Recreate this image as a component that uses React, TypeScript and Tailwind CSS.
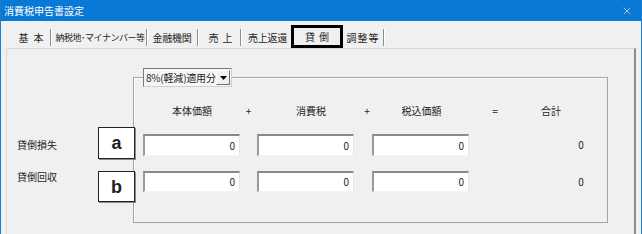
import { X } from 'lucide-react';

const tabs = [
  { label: '基本', cls: 'w-[39px] pl-[5px] tracking-[5px] border-r' },
  { label: '納税地･マイナンバー等', cls: 'w-[96px] pl-[3px] text-[9px] tracking-[-0.5px] border-r' },
  { label: '金融機関', cls: 'w-[51px] tracking-[-0.3px] border-r' },
  { label: '売上', cls: 'w-[43px] pl-[7px] tracking-[4px] border-r' },
  { label: '売上返還', cls: 'w-[50px] pl-[3px] tracking-[-0.3px]' },
];

const Field = ({ top, h }: { top: string; h: string }) => (
  <div
    className={`${top} ${h} w-[97px] bg-white border-t-2 border-l-2 border-t-[#8a8a8a] border-l-[#9a9a9a] border-r border-b border-r-[#e6e6e6] border-b-[#f4f4f4] flex items-center justify-end pr-[4px] text-[10px] leading-none`}
  >
    0
  </div>
);

const Mark = ({ letter }: { letter: string }) => (
  <div className="w-[37px] h-full bg-white border border-[#222] shadow-[1px_1px_0_#8a8a8a] flex items-center justify-center font-['Liberation_Sans',sans-serif] font-bold text-[18px] leading-none">
    {letter}
  </div>
);

export default function App() {
  return (
    <div className="w-[642px] h-[234px] overflow-hidden bg-[#f0f0f0] border-x border-[#1a7fd4] flex flex-col text-[#1e1e1e] font-['Noto_Sans_CJK_JP',sans-serif] text-[10px]">
      {/* title bar */}
      <div className="h-[21px] shrink-0 bg-[#0a78d5] flex items-center justify-between pl-[3px] pr-[8px] text-white text-[10px]">
        <span>消費税申告書設定</span>
        <X size={12} strokeWidth={1.2} />
      </div>

      {/* tabs */}
      <div className="h-[23px] mt-[4px] shrink-0 flex items-start pl-[11px]">
        {tabs.map((t) => (
          <div
            key={t.label}
            className={`${t.cls} mt-[4px] h-[17px] flex items-center justify-center border-[#8e8e8e] shadow-[1px_0_0_#ffffff] whitespace-nowrap`}
          >
            {t.label}
          </div>
        ))}
        <div className="w-[52px] h-[23px] border-[3px] border-black flex items-center justify-center tracking-[4px] pl-[4px]">
          貸倒
        </div>
        <div className="w-[41px] mt-[4px] h-[17px] flex items-center justify-center border-r border-[#8e8e8e] shadow-[1px_0_0_#ffffff] tracking-[1px]">
          調整等
        </div>
      </div>

      {/* panel */}
      <div className="flex-1 mx-[5px] border-l border-t border-[#dadada] border-r-2 border-r-[#8c8c8c]">
        <div className="mt-[28px] ml-[126px] w-[475px] h-[146px] border border-[#a3a3a3] shadow-[inset_1px_1px_0_#ffffff]">
          {/* dropdown */}
          <div className="-mt-[10px] ml-[9px] w-[89px] h-[19px] bg-[#f6f6f6] border border-t-[#7a7a7a] border-l-[#7a7a7a] border-r-[#d0d0d0] border-b-[#d0d0d0] flex items-center pl-[2px] pr-[1px]">
            <span className="flex-1 text-[10px] tracking-[-0.2px] leading-none whitespace-nowrap">8%(軽減)適用分</span>
            <div className="w-[14px] h-[15px] bg-[#f0f0f0] border border-t-white border-l-white border-r-[#6f6f6f] border-b-[#6f6f6f] flex items-center justify-center">
              <svg width="7" height="4" viewBox="0 0 7 4">
                <polygon points="0,0 7,0 3.5,4" fill="#000" />
              </svg>
            </div>
          </div>

          {/* headers */}
          <div className="mt-[17px] h-[14px] flex items-center leading-none">
            <div className="w-[9px]" />
            <div className="w-[97px] text-center pl-[1px]">本体価額</div>
            <div className="w-[17px] text-center">+</div>
            <div className="w-[97px] text-center pl-[11px]">消費税</div>
            <div className="w-[18px] text-center pl-[8px]">+</div>
            <div className="w-[97px] text-center pl-[2px]">税込価額</div>
            <div className="w-[52px] text-center">=</div>
            <div className="w-[60px] text-center">合計</div>
          </div>

          {/* row a */}
          <div className="mt-[9px] -ml-[117px] h-[32px] flex items-start">
            <div className="w-[81px] pt-[11px] leading-[14px]">貸倒損失</div>
            <Mark letter="a" />
            <div className="w-[8px]" />
            <Field top="mt-[7px]" h="h-[22px]" />
            <div className="w-[17px]" />
            <Field top="mt-[7px]" h="h-[22px]" />
            <div className="w-[18px]" />
            <Field top="mt-[7px]" h="h-[22px]" />
            <div className="w-[92px]" />
            <div className="w-[40px] mt-[13px] text-center leading-none">0</div>
          </div>

          {/* row b */}
          <div className="mt-[12px] -ml-[117px] h-[31px] flex items-start">
            <div className="w-[81px] pt-[0px] leading-[12px]">貸倒回収</div>
            <Mark letter="b" />
            <div className="w-[8px]" />
            <Field top="mt-0" h="h-[21px]" />
            <div className="w-[17px]" />
            <Field top="mt-0" h="h-[21px]" />
            <div className="w-[18px]" />
            <Field top="mt-0" h="h-[21px]" />
            <div className="w-[92px]" />
            <div className="w-[40px] mt-[6px] text-center leading-none">0</div>
          </div>
        </div>
      </div>
    </div>
  );
}
